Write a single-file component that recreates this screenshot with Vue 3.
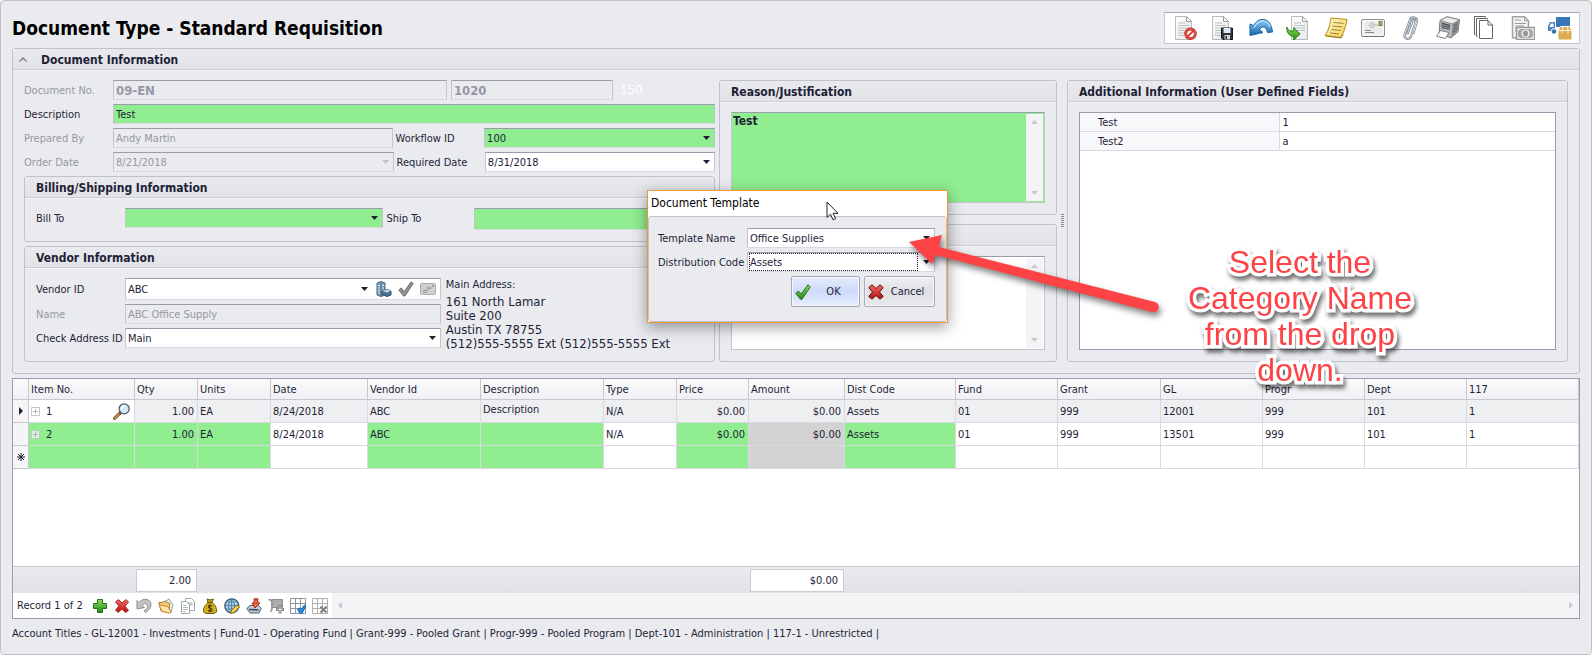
<script setup>
import { ref } from 'vue'

const tools = [
  ['void', 'Void document'], ['save', 'Save document'], ['undo', 'Undo'], ['send', 'Submit'],
  ['note', 'Notes'], ['mail', 'Mail'], ['clip', 'Attachments'], ['print', 'Print'],
  ['copy', 'Copy'], ['pay', 'Payment'], ['ship', 'Receiving']
]
const navTools = [
  ['plus', 'Add'], ['cross', 'Delete'], ['revert', 'Revert'], ['folder', 'Open'], ['pages', 'Copy rows'],
  ['money', 'Budget'], ['globe', 'Web'], ['import', 'Import'], ['cart', 'Add to cart'],
  ['gridok', 'Select all'], ['gridno', 'Clear selection']
]

const columns = [
  ['Item No.', 106], ['Qty', 63], ['Units', 73], ['Date', 97], ['Vendor Id', 113], ['Description', 123],
  ['Type', 73], ['Price', 72], ['Amount', 96], ['Dist Code', 111], ['Fund', 102], ['Grant', 103],
  ['GL', 102], ['Progr', 102], ['Dept', 102], ['117', 0]
]
const required = [0, 1, 2, 4, 5, 7, 9]
const numeric = [1, 7, 8]
const rows = [
  { mark: 'current', cells: ['1', '1.00', 'EA', '8/24/2018', 'ABC', 'Description', 'N/A', '$0.00', '$0.00', 'Assets', '01', '999', '12001', '999', '101', '1'] },
  { mark: '', cells: ['2', '1.00', 'EA', '8/24/2018', 'ABC', '', 'N/A', '$0.00', '$0.00', 'Assets', '01', '999', '13501', '999', '101', '1'] },
  { mark: 'new', cells: Array(16).fill('') }
]
function cellClass(r, c) {
  return {
    num: numeric.includes(c),
    need: r > 0 && required.includes(c),
    locked: r > 0 && c === 8,
    item: c === 0,
    raised: r === 0 && c === 5
  }
}

const description = ref('Test')
const reason = ref('Test')
const comments = ref('')
const shipTo = ref('')
</script>

<template>
  <div class="window">
    <svg class="defs" width="0" height="0" aria-hidden="true">
      <defs>
        <linearGradient id="g-blue" x1="0" y1="0" x2="0" y2="1"><stop offset="0" stop-color="#8fd0f8" /><stop offset="1" stop-color="#1667ad" /></linearGradient>
        <linearGradient id="g-green" x1="0" y1="0" x2="0" y2="1"><stop offset="0" stop-color="#8be05a" /><stop offset="1" stop-color="#1f8a12" /></linearGradient>
        <linearGradient id="g-red" x1="0" y1="0" x2="0" y2="1"><stop offset="0" stop-color="#f46a62" /><stop offset="1" stop-color="#b90d12" /></linearGradient>
        <linearGradient id="g-gold" x1="0" y1="0" x2="1" y2="1"><stop offset="0" stop-color="#fffbd0" /><stop offset="1" stop-color="#f2d052" /></linearGradient>
        <linearGradient id="g-page" x1="0" y1="0" x2="1" y2="1"><stop offset="0" stop-color="#ffffff" /><stop offset="1" stop-color="#e4e8e8" /></linearGradient>
      </defs>
      <symbol id="i-page" viewBox="0 0 24 24">
        <path d="M3.500.5h11l5 5v18h-16z" fill="url(#g-page)" stroke="#b7babb" />
        <path d="M14.500.5v5h5z" fill="#fff" stroke="#999c9d" stroke-linejoin="round" />
        <path d="M6 7h7M6 9.500h11M6 12h11M6 14.500h11M6 17h7M6 19.500h6" stroke="#bcbfc1" />
      </symbol>
      <symbol id="i-void" viewBox="0 0 24 24">
        <use href="#i-page" width="24" height="24" x="-2" />
        <circle cx="16.500" cy="17.800" r="4.800" fill="#fff" stroke="#a51a15" stroke-width="2.800" />
        <circle cx="16.500" cy="17.800" r="4.800" fill="none" stroke="#e8513f" stroke-width="1.800" />
        <path d="M13.200 21l6.600-6.600" stroke="#dc3c2c" stroke-width="1.800" />
      </symbol>
      <symbol id="i-save" viewBox="0 0 24 24">
        <use href="#i-page" width="24" height="24" x="-2" />
        <path d="M10.500 12h11v11.500h-9.500l-1.500-1.500z" fill="#30343b" stroke="#15171b" />
        <path d="M12.500 12h7v5h-7z" fill="#dbe7f6" />
        <path d="M13.500 19H19v4.500h-5.500z" fill="#d7d9dc" /><path d="M14.500 20H16v3h-1.500z" fill="#30343b" />
      </symbol>
      <symbol id="i-undo" viewBox="0 0 24 24">
        <path d="M1 8l3.500 1.500C7.500 5.500 10 3 14.500 3.500c5 .5 8 4.500 9 12.500l-5 .5c-.8-4-3-6.500-6-5l-2 2 3.500 3-13 3z" fill="url(#g-blue)" stroke="#1b61a2" stroke-linejoin="round" />
        <path d="M5 11.500C8 6.500 11 4.500 14.500 5c3 .4 5.500 2.500 6.800 6" fill="none" stroke="#c2e7ff" stroke-width="1.200" />
      </symbol>
      <symbol id="i-send" viewBox="0 0 24 24">
        <use href="#i-page" width="24" height="24" x="2" />
        <path d="M.8 11c1.500 3.500 4 4.500 7 4v-3.500l6 6.500-6 6v-3.500C3 20 .5 16.500.8 11z" fill="url(#g-green)" stroke="#2a7a16" stroke-linejoin="round" />
      </symbol>
      <symbol id="i-note" viewBox="0 0 24 24">
        <path d="M7 2l16 1.500c-1 6-2.500 11-6 18L1 19.500C5 14 6 8 7 2z" fill="url(#g-gold)" stroke="#b88b14" stroke-linejoin="round" />
        <path d="M2 20l15 2 2-4" fill="none" stroke="#9c7b1c" />
        <path d="M9.500 6.500l10 .9M8.500 10l10 .9M7.500 13.500l9.500.9M6 17l9 .9" stroke="#a08232" />
      </symbol>
      <symbol id="i-mail" viewBox="0 0 24 24">
        <rect x=".5" y="3.500" width="23" height="17" rx="1.500" fill="#ececeb" stroke="#8f908f" />
        <path d="M2 5h20v14H2z" fill="none" stroke="#fff" />
        <path d="M1 20.500h22" stroke="#727372" /><path d="M4 14.500h6M4 16.500h9" stroke="#8a8c8d" />
        <circle cx="11" cy="9" r="2.500" fill="none" stroke="#b5b5b5" /><path d="M10 9h7" stroke="#bdbdbd" />
        <rect x="18" y="5.500" width="3" height="4" fill="#b3a777" stroke="#857b52" />
      </symbol>
      <symbol id="i-clip" viewBox="0 0 24 24">
        <g fill="none" stroke-linecap="round" stroke-linejoin="round">
          <path d="M9.500 17.500l5-12.500c1-2.200 3.800-1.200 3.200 1.200L13 20c-1.500 4.500-7.500 3-6.300-1.500L12 3.800C13.500.2 19.500.8 19 5.500L15.500 17" stroke="#6f7c86" stroke-width="2.200" />
          <path d="M9.500 17.500l5-12.500c1-2.200 3.800-1.200 3.200 1.200L13 20c-1.500 4.500-7.500 3-6.300-1.500L12 3.800C13.500.2 19.500.8 19 5.500L15.500 17" stroke="#dfe5e9" />
        </g>
      </symbol>
      <symbol id="i-print" viewBox="0 0 24 24">
        <path d="M4 4.500L11 .8l12.500 3-1.500 12-7 6-12-3.500z" fill="#b9bbbc" stroke="#77797a" stroke-linejoin="round" />
        <path d="M4 4.500L11 .8l12.500 3L16.500 8z" fill="#ececec" stroke="#8c8c8c" stroke-linejoin="round" />
        <path d="M16.500 8l6.500-4-1.300 11.500L15.500 21z" fill="#8a8c8e" />
        <path d="M5.500 6.500l8.500 2.300-.6 5.200-7.700-2z" fill="#4a4f54" /><path d="M6 8.500l7 2M6 10.500l7 2" stroke="#9aa0a5" />
        <path d="M4.500 14.500l8.500 2-3.500 6L.6 20.300z" fill="#fafcfc" stroke="#7e8284" stroke-linejoin="round" />
        <path d="M17.500 10l4-2.500M17.300 13l4-2.500M17 16l4-2.800" stroke="#5e6164" />
      </symbol>
      <symbol id="i-copy" viewBox="0 0 24 24">
        <g fill="#fff" stroke="#666"><path d="M2.500 18.500h-1v-18h11v1" fill="none" /><path d="M4.500 20.500h-1v-18h11v1" fill="none" /><path d="M6.500 4.500H15l4.500 4.500v13.500h-13z" /><path d="M15 4.500V9h4.500" fill="none" /></g>
      </symbol>
      <symbol id="i-pay" viewBox="0 0 24 24">
        <path d="M1.500.8h12l4 4v17h-16z" fill="#f4f4f4" stroke="#a2a2a2" stroke-width="1.500" /><path d="M13.500.8v4h4" fill="none" stroke="#a2a2a2" />
        <path d="M4 4h6M4 7.500h11M4 10h9M4 12.500h4M4 15h3" stroke="#989898" />
        <rect x="5.500" y="11.500" width="18" height="12" fill="#f4f4f4" stroke="#999" stroke-width="1.500" /><path d="M7 15l2-2h11l2 2v5l-2 2H9l-2-2z" fill="#a6a6a6" /><ellipse cx="14.500" cy="17.500" rx="4" ry="4" fill="#eee" /><ellipse cx="14.500" cy="17.500" rx="2.500" ry="3" fill="#979797" />
      </symbol>
      <symbol id="i-ship" viewBox="0 0 24 24">
        <path d="M8 1h14v10H8z" fill="#3876b5" /><path d="M2 6h5v9H0v-5z" fill="#4d84bb" /><path d="M3 7.500h2.500v3.500H1.500z" fill="#fff" />
        <circle cx="6" cy="15.500" r="2.800" fill="#3876b5" stroke="#fff" />
        <path d="M10 14l2.500-3.500h9L24 14v10H10z" fill="#dcaa50" stroke="#fff" /><path d="M10.500 14.500h13M15 11l-1 3.500v3M19.500 11l.5 3.500v3" fill="none" stroke="#fff5dd" />
      </symbol>
      <symbol id="i-building" viewBox="0 0 16 16">
        <path d="M1 2l4-1.500 4 1.500v12l-4 1.500L1 14z" fill="#7ea2bd" stroke="#47677f" /><path d="M5 1v14.500" stroke="#48697f" /><path d="M2 4.500h2M2 7h2M2 9.500h2M2 12h2M6 4.500h2M6 7h2" stroke="#dcecf7" />
        <path d="M6 10l5-1.500 4 1.500v4l-4 1.500-5-2z" fill="#48718f" stroke="#34566d" /><path d="M6 10l5-1.500 4 1.500-4 1.500z" fill="#bdd7e8" />
      </symbol>
      <symbol id="i-greycheck" viewBox="0 0 16 16"><path d="M.8 9l2.500-2 3 3.500L13 1l2.200 1.500L7 15H5.500z" fill="#929292" stroke="#6e6e6e" stroke-linejoin="round" /></symbol>
      <symbol id="i-greymail" viewBox="0 0 16 16"><rect x=".5" y="2.500" width="15" height="11" rx="1" fill="#d0d0d0" stroke="#adadad" /><path d="M3 9.500h5M3 11.500h4M7 7h5" stroke="#989898" /><circle cx="8.500" cy="7" r="1.200" fill="none" stroke="#a0a0a0" /><path d="M12 4h2v2h-2z" fill="#999" /></symbol>
      <symbol id="i-lens" viewBox="0 0 16 16"><path d="M7 9l-5.500 5.500" stroke="#7a4b1c" stroke-width="3" stroke-linecap="round" /><path d="M5.500 10.500L1.500 14.500" stroke="#d39a54" stroke-width="1.400" stroke-linecap="round" /><circle cx="10.500" cy="5.500" r="4.700" fill="#d3ecf8" stroke="#4e5d68" stroke-width="1.200" /><path d="M8 5.500A2.700 2.700 0 0111 3" fill="none" stroke="#fff" stroke-width="1.500" /></symbol>
      <symbol id="i-plus" viewBox="0 0 16 16"><path d="M5.500 1.500h5v4h4v5h-4v4h-5v-4h-4v-5h4z" fill="url(#g-green)" stroke="#2b6e1c" /></symbol>
      <symbol id="i-cross" viewBox="0 0 16 16"><path d="M1.500 4l3-2.500L8 5l4-3.500L14.500 4 11 8l3.500 4.500-3 2L8 11l-4 3.500L1.500 12 5 8z" fill="url(#g-red)" stroke="#b02a22" stroke-linejoin="round" /></symbol>
      <symbol id="i-cancel" viewBox="0 0 16 16"><path d="M.8 3.500L4 .8 8 4.500l4-3.700 3.200 2.700L11.500 8l3.700 4.500-3.200 2.700L8 11.500l-4 3.700L.8 12.500 4.500 8z" fill="url(#g-red)" stroke="#5e0d0d" stroke-linejoin="round" /></symbol>
      <symbol id="i-revert" viewBox="0 0 16 16"><path d="M1 2.500l2 2C6 1 11 0 14 3.500c2.500 3.500 0 8.500-4.500 11L8 13c3-2 4.500-4.500 3-6.500C9.500 5 7.500 5.500 6 7.500l2.500 2L1 11z" fill="#c4c4c4" stroke="#8f8f8f" /></symbol>
      <symbol id="i-folder" viewBox="0 0 16 16"><path d="M7 3.500l4-2.500 4 5.500-2 8z" fill="#f5f7f8" stroke="#939ba0" /><path d="M.8 4.500h4L6.300 3 12 5.500l-1 9.500L3 13z" fill="#f4c978" stroke="#b07a25" stroke-linejoin="round" /><path d="M1 7l9 1.500 3 5.500-1.500 1.200-7.500-2z" fill="#ffe3a6" stroke="#c48d34" /></symbol>
      <symbol id="i-pages" viewBox="0 0 16 16"><path d="M5.500.5h6l3 3v9h-9z" fill="#fff" stroke="#a0a8ac" /><path d="M7.500 5h5M7.500 7h5" stroke="#8fa6b4" /><path d="M1.500 3.500h5l3 3v9h-8z" fill="#fff" stroke="#a0a8ac" /><path d="M3 7.500h3M3 9.500h5M3 11.500h5M3 13.500h3" stroke="#b5bdc2" /></symbol>
      <symbol id="i-money" viewBox="0 0 16 16"><path d="M5 1l3 1 3.500-1L10 4.500c4 3 5 6.500 4.500 9.500L12 15.500H4L1.500 14C1 10 3 7 6 4.500z" fill="#cfae1c" stroke="#6f5908" stroke-linejoin="round" /><path d="M5.500 4.500h5" stroke="#6f5908" stroke-width="1.400" /><path d="M10 8C8 6.500 6 7.500 6.500 9s3.500 1 3.500 2.800-2.500 2-4 .7M8 6.500v7.500" fill="none" stroke="#4a3b05" stroke-width="1.200" /></symbol>
      <symbol id="i-globe" viewBox="0 0 16 16"><circle cx="7.800" cy="7.800" r="7" fill="#a9cde6" stroke="#2f5674" stroke-width="1.300" /><path d="M7.500 1v13M1 7.500h13M2.500 4h10M2.500 11h10M7.500 1C3.500 5 3.500 10 7.500 14M7.500 1c4 4 4 9 0 13" fill="none" stroke="#4b7797" stroke-width=".8" /><path d="M6.500 15.500l1-3 5.500-5.500 2.500 2L10 14.500z" fill="#ffd54c" stroke="#946a14" /></symbol>
      <symbol id="i-import" viewBox="0 0 16 16"><path d="M.8 10.500L4 7.500h8.500l2.700 3-2 4.500H4z" fill="#bfccd4" stroke="#53636f" stroke-linejoin="round" /><path d="M3 11.500l9.500.5" stroke="#36485a" stroke-width="1.500" /><path d="M8 .8h4L11.500 5H14l-5 5-3-5h2.200z" fill="#ea6540" stroke="#a32b17" /></symbol>
      <symbol id="i-cart" viewBox="0 0 16 16"><path d="M.5 1.500L3 2l1 2.500V11L2.500 14" fill="none" stroke="#8e8e8e" stroke-width="1.500" /><path d="M4 1.500h10.500v8H4z" fill="#ababab" stroke="#8e8e8e" /><path d="M12 7v8.500M8 11.500h8" stroke="#888" stroke-width="3" /><path d="M12 8.500v6M9.500 11.500h5" stroke="#e0e0e0" /></symbol>
      <symbol id="i-sheet" viewBox="0 0 16 16"><path d="M.5.500h15v15H.5z" fill="#fff" stroke="currentColor" /><path d="M.5 5.500h15M.5 10.500h15M5.500.5v15M10.500.5v15" stroke="currentColor" /></symbol>
      <symbol id="i-gridok" viewBox="0 0 16 16"><use href="#i-sheet" width="16" height="16" color="#8b959e" /><path d="M7.500 11.500l2-1.500 1.500 1.500L14.500 7 16 8l-4 7.500h-2z" fill="#2b8de0" stroke="#1867b0" /></symbol>
      <symbol id="i-gridno" viewBox="0 0 16 16"><use href="#i-sheet" width="16" height="16" color="#b0b0b0" /><path d="M8.500 8.500l6 6M14.500 8.500l-6 6" stroke="#808080" stroke-width="2" /></symbol>
      <symbol id="i-ok" viewBox="0 0 16 16"><path d="M.8 9.500l2.500-2.500 3 3L13 .8 15.200 3 7 15.200H5.500z" fill="url(#g-green)" stroke="#25691a" stroke-linejoin="round" /></symbol>
      <symbol id="i-down" viewBox="0 0 7 4"><path d="M0 0h7L3.500 4z" fill="currentColor" /></symbol>
      <symbol id="i-up" viewBox="0 0 7 4"><path d="M0 4h7L3.500 0z" fill="currentColor" /></symbol>
    </svg>

    <header class="top">
      <h1>Document Type - Standard Requisition</h1>
      <div class="toolbar" role="toolbar" aria-label="Document actions">
        <button v-for="[icon, name] in tools" :key="icon" type="button" :aria-label="name">
          <svg width="24" height="24"><use :href="'#i-' + icon" /></svg>
        </button>
      </div>
    </header>

    <section class="panel info">
      <h2><button type="button" class="fold" aria-label="Collapse"><svg width="8" height="5" viewBox="0 0 8 5"><path d="M.5 4.500L4 1l3.500 3.500" fill="none" stroke="#85869a" stroke-width="1.500" /></svg></button>Document Information</h2>
      <div class="body columns">
        <div class="left">
          <div class="row">
            <label class="dim" for="docno">Document No.</label>
            <input id="docno" class="field strong docno" value="09-EN" disabled>
            <input class="field strong docseq" value="1020" aria-label="Document sequence" disabled>
            <span class="ghost">150</span>
          </div>
          <div class="row">
            <label for="desc">Description</label>
            <input id="desc" v-model="description" class="field need grow">
          </div>
          <div class="row">
            <label class="dim" for="prep">Prepared By</label>
            <input id="prep" class="field half" value="Andy Martin" disabled>
            <label class="second" for="flow">Workflow ID</label>
            <div class="field combo need rest"><select id="flow"><option>100</option></select><svg width="7" height="4"><use href="#i-down" /></svg></div>
          </div>
          <div class="row">
            <label class="dim" for="odate">Order Date</label>
            <div class="field combo off half"><select id="odate" disabled><option>8/21/2018</option></select><svg width="7" height="4"><use href="#i-down" /></svg></div>
            <label class="second" for="rdate">Required Date</label>
            <div class="field combo rest"><select id="rdate"><option>8/31/2018</option></select><svg width="7" height="4"><use href="#i-down" /></svg></div>
          </div>
          <section class="panel">
            <h2>Billing/Shipping Information</h2>
            <div class="body row bill">
              <label for="billto">Bill To</label>
              <div class="field combo need billto"><select id="billto"><option></option></select><svg width="7" height="4"><use href="#i-down" /></svg></div>
              <label class="second" for="shipto">Ship To</label>
              <input id="shipto" v-model="shipTo" class="field need tall grow">
            </div>
          </section>
          <section class="panel vendor">
            <h2>Vendor Information</h2>
            <div class="body split">
              <div class="stack">
                <div class="row">
                  <label for="vid">Vendor ID</label>
                  <div class="field combo tall grow">
                    <select id="vid"><option>ABC</option></select><svg width="7" height="4"><use href="#i-down" /></svg>
                    <button type="button" aria-label="Vendor details"><svg width="16" height="16"><use href="#i-building" /></svg></button>
                    <button type="button" aria-label="Validate vendor"><svg width="16" height="16"><use href="#i-greycheck" /></svg></button>
                    <button type="button" aria-label="Mail vendor"><svg width="16" height="16"><use href="#i-greymail" /></svg></button>
                  </div>
                </div>
                <div class="row">
                  <label class="dim" for="vname">Name</label>
                  <input id="vname" class="field grow" value="ABC Office Supply" disabled>
                </div>
                <div class="row">
                  <label for="addr">Check Address ID</label>
                  <div class="field combo grow"><select id="addr"><option>Main</option></select><svg width="7" height="4"><use href="#i-down" /></svg></div>
                </div>
              </div>
              <div class="address">
                <p>Main Address:</p>
                <address>161 North Lamar<br>Suite 200<br>Austin TX 78755<br>(512)555-5555 Ext (512)555-5555 Ext</address>
              </div>
            </div>
          </section>
        </div>

        <div class="middle">
          <section class="panel reason">
            <h2>Reason/Justification</h2>
            <div class="body">
              <div class="memo need">
                <textarea v-model="reason" aria-label="Reason or justification"></textarea>
                <div class="scroll"><svg width="7" height="4"><use href="#i-up" /></svg><svg width="7" height="4"><use href="#i-down" /></svg></div>
              </div>
            </div>
          </section>
          <section class="panel comments">
            <h2></h2>
            <div class="body">
              <div class="memo">
                <textarea v-model="comments" aria-label="Comments"></textarea>
                <div class="scroll"><svg width="7" height="4"><use href="#i-up" /></svg><svg width="7" height="4"><use href="#i-down" /></svg></div>
              </div>
            </div>
          </section>
        </div>
        <div class="grip"></div>

        <section class="panel extra">
          <h2>Additional Information (User Defined Fields)</h2>
          <div class="body">
            <div class="list">
              <table class="udf">
                <tbody>
                  <tr><th scope="row">Test</th><td>1</td></tr>
                  <tr><th scope="row">Test2</th><td>a</td></tr>
                </tbody>
              </table>
            </div>
          </div>
        </section>
      </div>
    </section>

    <section class="grid">
      <div class="rows">
        <table class="items">
          <colgroup>
            <col class="mark">
            <col v-for="[name, w] in columns" :key="name" :style="w ? { width: w + 'px' } : {}">
          </colgroup>
          <thead><tr><th></th><th v-for="[name] in columns" :key="name" scope="col">{{ name }}</th></tr></thead>
          <tbody>
            <tr v-for="(row, r) in rows" :key="r" :class="row.mark">
              <td class="marker">
                <svg v-if="row.mark === 'current'" width="4" height="8" viewBox="0 0 4 8"><path d="M0 0l4 4-4 4z" fill="#1e1e32" /></svg>
                <svg v-if="row.mark === 'new'" width="8" height="8" viewBox="0 0 8 8"><path d="M4 0v8M0 4h8M1 1l6 6M7 1L1 7" stroke="#1e1e32" /></svg>
              </td>
              <td v-for="(cell, c) in row.cells" :key="c" :class="cellClass(r, c)">
                <div v-if="c === 0 && cell" class="itemcell">
                  <button type="button" aria-label="Expand row"><svg width="9" height="9" viewBox="0 0 9 9"><path d="M.5.500h8v8h-8z" fill="#fff" fill-opacity=".6" stroke="#c3c4cd" /><path d="M2 4.500h5M4.500 2v5" stroke="#b3b4bd" /></svg></button>
                  <span>{{ cell }}</span>
                  <button v-if="r === 0" type="button" class="find" aria-label="Find item"><svg width="17" height="17"><use href="#i-lens" /></svg></button>
                </div>
                <template v-else>{{ cell }}</template>
              </td>
            </tr>
          </tbody>
        </table>
      </div>
      <div class="totals"><output class="qty">2.00</output><output class="amt">$0.00</output></div>
      <div class="nav">
        <div class="navtools">
          <span>Record 1 of 2</span>
          <button v-for="[icon, name] in navTools" :key="icon" type="button" :aria-label="name"><svg width="16" height="16"><use :href="'#i-' + icon" /></svg></button>
        </div>
        <div class="hscroll">
          <svg width="4" height="7" viewBox="0 0 4 7"><path d="M4 0v7L0 3.500z" fill="currentColor" /></svg>
          <svg width="4" height="7" viewBox="0 0 4 7"><path d="M0 0v7l4-3.500z" fill="currentColor" /></svg>
        </div>
      </div>
    </section>

    <footer>Account Titles - GL-12001 - Investments | Fund-01 - Operating Fund | Grant-999 - Pooled Grant | Progr-999 - Pooled Program | Dept-101 - Administration | 117-1 - Unrestricted |</footer>

    <form class="dialog" role="dialog" aria-labelledby="dlg" @submit.prevent>
      <h3 id="dlg">Document Template</h3>
      <div class="dbody">
        <div class="drow">
          <label for="tname">Template Name</label>
          <div class="field combo grow"><select id="tname"><option>Office Supplies</option></select><svg width="7" height="4"><use href="#i-down" /></svg></div>
        </div>
        <div class="drow">
          <label for="dcode">Distribution Code</label>
          <div class="field combo focus grow"><select id="dcode"><option>Assets</option></select><svg width="7" height="4"><use href="#i-down" /></svg></div>
        </div>
        <div class="dbuttons">
          <button type="submit" class="ok"><svg width="16" height="16"><use href="#i-ok" /></svg><span>OK</span></button>
          <button type="button"><svg width="16" height="16"><use href="#i-cancel" /></svg><span>Cancel</span></button>
        </div>
      </div>
    </form>

    <svg class="cursor" width="13" height="20" viewBox="0 0 13 20"><path d="M1 1v15.500l3.500-3.300 2.500 5.600 2.600-1.200-2.500-5.300H12z" fill="#fff" stroke="#20202c" stroke-linejoin="round" /></svg>
    <svg class="arrow" width="256" height="84" viewBox="0 0 256 84"><path d="M1 10L34 3l-3 12 216 55a4.800 4.800 0 01-3 10L28 23l-4 9z" fill="#fd4345" /></svg>
    <p class="callout">Select the<br>Category Name<br>from the drop<br>down.</p>
  </div>
</template>

<style>
body { margin: 0; }
</style>

<style scoped>
* { box-sizing: border-box; }
.window {
  position: relative;
  display: flex;
  flex-direction: column;
  min-height: 100vh;
  padding: 11px 11px 0;
  border: 1px solid #bfc0c9;
  border-radius: 4px;
  background: #eaebef;
  color: #1e1e37;
  font: 11px/14px Tahoma, "DejaVu Sans Condensed", "DejaVu Sans", sans-serif;
}
.defs, .cursor, .arrow, .callout, .dialog { position: absolute; }
button, input, select, textarea { font: inherit; color: inherit; margin: 0; }
button { display: inline-flex; align-items: center; justify-content: center; padding: 0; border: 0; background: none; }
svg { display: block; flex: none; }
h1, h2, h3, p { margin: 0; }

.top { display: flex; justify-content: space-between; height: 32px; margin-bottom: 4px; }
h1 { color: #000; font-size: 19px; line-height: 32px; font-weight: bold; }
.toolbar { display: flex; width: 416px; padding-left: 2px; background: #fff; border: 1px solid #c7c8d0; border-top-color: #a5a6b3; }
.toolbar button { flex: 1; }

.panel { border: 1px solid #c0c1cb; border-radius: 3px; display: flex; flex-direction: column; }
.panel h2 {
  display: flex; align-items: center; height: 21px; padding: 1px 0 0 11px;
  border-bottom: 1px solid #cccdd5; background: linear-gradient(#e9eaed, #e2e3e7);
  box-shadow: 0 1px #f5f5f8; font-size: 12px; line-height: 16px; font-weight: bold;
}
.body { padding: 10px 11px 11px; flex: 1; display: flex; }
.info > h2 { padding-left: 6px; }
.fold { margin-right: 14px; }
.columns { display: grid; grid-template-columns: 695fr 338fr 10px 501fr; }

.left { display: flex; flex-direction: column; gap: 4px; margin-right: 4px; }
.row { display: flex; align-items: center; }
.row > label { padding-top: 1px; }
.row > label:first-child { width: 89px; flex: none; white-space: nowrap; }
.dim { color: #9697a3; }
.field {
  height: 20px; min-width: 0; padding: 1px 2px 0; border: 1px solid #c3c4ce;
  border-top-color: #9b9cab; border-bottom-color: #d9dae1; background: #fff; border-radius: 0; outline: 0;
}
.field:disabled, .off { background: transparent; color: #9697a3; }
.field.need { background: #90ee90; }
.field.tall { height: 22px; }
.strong { font-size: 13px; font-weight: bold; }
.docno { flex: 336; margin-right: 4px; }
.docseq { flex: 160; }
.ghost { width: 102px; padding-left: 7px; color: #fff; font-size: 13px; }
.half { flex: 281; }
.row > .second { flex: 91; padding-left: 3px; white-space: nowrap; }
.rest { flex: 229; }
.grow { flex: 1; }
.combo { display: flex; align-items: center; padding: 0 4px 0 2px; }
.combo select { flex: 1; min-width: 0; height: 18px; padding: 1px 0 0; border: 0; background: none; appearance: none; outline: 0; }
.combo select:disabled { opacity: 1; color: #9697a3; }
.off > svg { color: #c2c3cb; }
.combo button { margin-left: 6px; }
.combo > svg + button { margin-left: 8px; }
.bill .billto { flex: 258; }
.bill > .second { flex: 90; }
.bill > .grow { flex: 230; }
.bill { align-items: flex-start; }
.bill label { line-height: 20px; }
.vendor { flex: 1; }
.split { padding-bottom: 10px; }
.stack { flex: 406; display: flex; flex-direction: column; gap: 4px; }
.address { flex: 258; margin-left: 5px; white-space: nowrap; }
address { margin-top: 3px; font-style: normal; font-size: 13px; line-height: 14px; }

.middle { display: flex; flex-direction: column; gap: 9px; }
.reason { flex: 135; }
.comments { flex: 138; }
.memo { flex: 1; display: flex; padding: 1px; border: 1px solid #c3c4ce; border-top-color: #9b9cab; background: #fff; }
.memo.need { background: #90ee90; }
.memo textarea { flex: 1; min-width: 0; height: 100%; padding: 0; border: 0; outline: 0; background: none; resize: none; overflow: hidden; font-size: 12px; line-height: 14px; font-weight: bold; }
.scroll { width: 17px; padding: 6px 5px; display: flex; flex-direction: column; justify-content: space-between; background: #f4f4f7; color: #c6c7cf; }
.grip { align-self: center; justify-self: center; width: 3px; height: 14px; background: repeating-linear-gradient(#8b8c9a 0 1px, transparent 1px 2px); }
.list { flex: 1; border: 1px solid #9b9cab; background: #fff; }
table { border-collapse: separate; border-spacing: 0; width: 100%; table-layout: fixed; }
.udf th, .udf td { height: 19px; padding: 1px 3px 0; border-bottom: 1px solid #d9dae1; font-weight: normal; text-align: left; }
.udf th { width: 42%; padding-left: 18px; background: #f8f8fb; border-right: 1px solid #d9dae1; }

.grid { flex: 1; display: flex; flex-direction: column; margin-top: 4px; border: 1px solid #9b9cab; background: #fff; }
.rows { flex: 1; }
.mark { width: 16px; }
.items th, .items td { padding: 1px 3px 0 2px; font-weight: normal; text-align: left; white-space: nowrap; border-right: 1px solid #d9dae1; border-bottom: 1px solid #d9dae1; }
.items th { height: 21px; border-color: #c7c8d0; background: linear-gradient(#fafafb, #f0f0f3); }
.items td { height: 23px; }
.items .current td { background: #eeeff1; }
.items .current td.item { background: #fff; }
.items tbody td.marker { padding: 0; background: #f5f5f8; border-color: #c7c8d0; }
.marker svg { margin: 0 auto; }
.items .need { background: #90ee90; }
.items .locked { background: #d3d3d3; }
.items .num { text-align: right; }
.items td.raised { padding-bottom: 4px; }
.items td.item { padding: 1px 4px 0 2px; }
.itemcell { display: flex; align-items: center; gap: 6px; }
.find { margin-left: auto; }
.totals { display: flex; height: 27px; padding: 2px 0 1px 123px; border-top: 1px solid #c7c8d0; background: linear-gradient(#eaebef, #e1e2e6); }
.totals output { display: block; padding: 4px 5px; text-align: right; background: #fff; border: 1px solid #c9cad3; }
.qty { width: 61px; margin-right: 553px; }
.amt { width: 94px; }
.nav { display: flex; height: 25px; }
.navtools { display: flex; align-items: center; width: 319px; padding-left: 4px; gap: 6px; }
.navtools span { width: 69px; white-space: nowrap; }
.hscroll { flex: 1; display: flex; align-items: center; justify-content: space-between; padding: 0 6px; background: #f4f4f7; color: #c6c7cf; }
footer { height: 35px; padding-top: 8px; white-space: nowrap; }

.dialog { left: 646px; top: 189px; width: 301px; background: #fff; border: 1px solid #ef9634; box-shadow: 0 4px 14px rgba(0, 0, 0, .4); }
h3 { height: 25px; padding-left: 3px; color: #000; font-size: 12px; line-height: 24px; font-weight: normal; }
.dbody { display: flex; flex-direction: column; gap: 4px; padding: 11px 11px 14px 9px; border: 1px solid #c0c1cb; border-radius: 3px; background: #eaebef; }
.drow { display: flex; align-items: center; }
.drow label { width: 89px; padding-top: 1px; white-space: nowrap; }
.drow .focus { padding: 0 4px 0 2px; }
.focus select { height: 16px; margin-right: 6px; outline: 1px dotted #1e1e32; }
.dbuttons { display: flex; justify-content: flex-end; gap: 4px; }
.dbuttons button { width: 71px; height: 31px; padding: 0 3px; border: 1px solid #a7a8b6; border-radius: 2px; background: linear-gradient(#f0f0f3, #dedfe4 50%, #e9e9ed); box-shadow: inset 0 0 0 1px #f7f7fa; }
.dbuttons .ok { width: 69px; background: linear-gradient(#e6ecfc, #cddafb 50%, #e8efff); }
.dbuttons span { flex: 1; text-align: center; }
.cursor { left: 825px; top: 200px; }
.arrow { left: 907px; top: 231px; filter: drop-shadow(2px 4px 3px rgba(0, 0, 0, .5)); }
.callout {
  left: 1168px; top: 243px; width: 262px; text-align: center; color: #fd4345;
  font: 32px/36px "Liberation Sans", Arial, sans-serif;
  -webkit-text-stroke: 7px #fff; paint-order: stroke fill; stroke-linejoin: round;
  filter: drop-shadow(2px 4px 2px rgba(0, 0, 0, .55));
}
</style>
